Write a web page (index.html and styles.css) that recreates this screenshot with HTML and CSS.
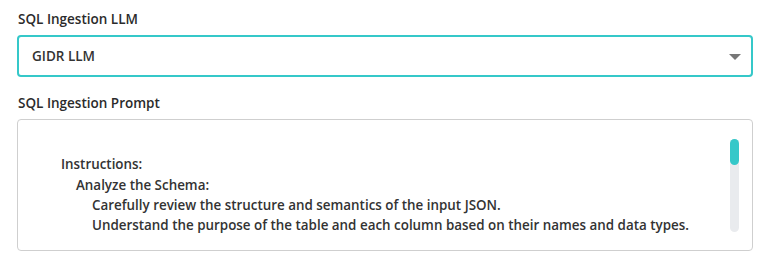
FILE: index.html
```html
<!DOCTYPE html>
<html>
<head>
<meta charset="utf-8">
<link rel="stylesheet" href="styles.css">
</head>
<body>
<div class="form">
  <div class="field">
    <label class="label">SQL Ingestion LLM</label>
    <div class="select">
      <span class="select-value">GIDR LLM</span>
      <span class="caret"></span>
    </div>
  </div>
  <div class="field">
    <label class="label">SQL Ingestion Prompt</label>
    <div class="prompt">
      <div class="prompt-text">
        <div class="line blank">&nbsp;</div>
        <div class="line l1">Instructions:</div>
        <div class="line l2">Analyze the Schema:</div>
        <div class="line l3">Carefully review the structure and semantics of the input JSON.</div>
        <div class="line l3">Understand the purpose of the table and each column based on their names and data types.</div>
      </div>
      <div class="scrollbar"><div class="thumb"></div></div>
    </div>
  </div>
</div>
</body>
</html>
```
FILE: styles.css
```css
* { box-sizing: border-box; }
body {
  margin: 0;
  background: #fff;
  font-family: "Open Sans", "Lato", sans-serif;
  color: #333;
}
.form {
  padding: 10px 22px 0 17px;
  display: flex;
  flex-direction: column;
  gap: 17px;
}
.field {
  display: flex;
  flex-direction: column;
  gap: 6px;
}
.label {
  font-size: 13.5px;
  font-weight: 600;
  color: #2b2b2b;
  padding-left: 1px;
  line-height: 19px;
}
.select {
  height: 42px;
  border: 2px solid #35c8c9;
  border-radius: 4px;
  display: flex;
  align-items: center;
  justify-content: space-between;
  padding: 0 10px 0 13px;
}
.select-value {
  font-size: 13.5px;
  font-weight: 600;
  color: #333;
}
.caret {
  width: 0;
  height: 0;
  border-left: 6px solid transparent;
  border-right: 6px solid transparent;
  border-top: 6px solid #777;
  margin-top: 1px;
}
.prompt {
  height: 132px;
  border: 1px solid #cfcfcf;
  border-radius: 4px;
  display: flex;
  padding: 14px 13px 0 43px;
}
.prompt-text {
  flex: 1;
  font-size: 13.4px;
  font-weight: 600;
  line-height: 20.3px;
  color: #333;
}
.line.l2 { padding-left: 15px; }
.line.l3 { padding-left: 31px; }
.scrollbar {
  width: 9px;
  height: 93px;
  margin-top: 5px;
  background: #e9ebee;
  border-radius: 5px;
}
.thumb {
  height: 26px;
  background: #35c8c9;
  border-radius: 5px;
}
```
